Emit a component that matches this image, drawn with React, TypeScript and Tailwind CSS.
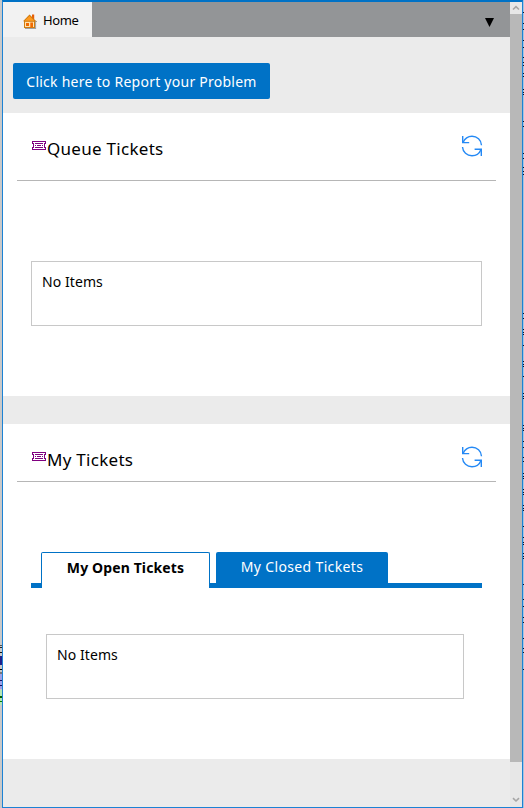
const leftMarks = [
  { y: 645, h: 1, color: "#555555" },
  { y: 647, h: 1, color: "#222222" },
  { y: 652, h: 1, color: "#111111" },
  { y: 656, h: 9, color: "#20208a" },
  { y: 669, h: 1, color: "#000000" },
  { y: 672, h: 2, color: "#777777" },
  { y: 674, h: 15, color: "#9da0e8" },
  { y: 680, h: 1, color: "#101060" },
  { y: 685, h: 1, color: "#101060" },
  { y: 690, h: 15, color: "#b4e6b4" },
  { y: 696, h: 2, color: "#006000" },
  { y: 701, h: 1, color: "#008000" },
]

const rightMarks = [
  12, 23, 29, 40, 47, 57, 62, 65, 73, 76, 89, 92, 94, 121, 126, 153, 158, 167, 171, 174,
  313, 318, 329, 332, 334, 345, 361, 364, 366, 376, 393, 396, 398, 425, 428, 430, 441,
  447, 457, 461, 473, 476, 478, 489, 492, 494, 505, 508, 510, 526, 537, 542, 544, 553, 556,
  558, 584, 599, 606, 617, 622, 638, 648, 652, 669,
]

function HomeIcon() {
  return (
    <svg width="15" height="15" viewBox="0 0 15 15" className="shrink-0">
      <path d="M2 14.5H13M12.6 8V15M12 7.5H14" stroke="#a0a0a0" strokeWidth="1" fill="none" />
      <path d="M9 .5H11.2V5H9Z" fill="#e85d04" />
      <path d="M6.5 .5L13.3 7.3H12V14H1V7.3H0Z" fill="#d07c10" />
      <path d="M6.5 2L11.3 6.7H1.7Z" fill="#ff9a1f" />
      <path d="M2 7.8H11V13H2Z" fill="#ffe2b0" />
      <path d="M3 9H6V12H3ZM7.3 8.5H10V13.3H7.3Z" fill="#f06a00" />
    </svg>
  )
}

function TicketIcon() {
  return (
    <svg width="14" height="9" viewBox="0 0 14 9" className="shrink-0" shapeRendering="crispEdges">
      <path
        d="M.5 .5H13.5V2.5H12.5V6.5H13.5V8.5H.5V6.5H1.5V2.5H.5Z"
        fill="none"
        stroke="#800080"
      />
      <path d="M3 2.5H11M3 6.5H11M3 4.5H4M5 4.5H9M10 4.5H11" fill="none" stroke="#800080" />
    </svg>
  )
}

function RefreshIcon() {
  return (
    <svg width="22" height="22" viewBox="0 0 22 22" fill="none" stroke="#2489f5" strokeWidth="1.4">
      <path d="M1.7 1V7.6H8.2" />
      <path d="M2 7.4C4 3 7 1.2 11 1.2C16 1.2 20.3 5 20.5 10.2" />
      <path d="M20.3 21V14.2H13.6" />
      <path d="M20 14.4C18.3 18.7 15 20.7 11 20.7C6 20.7 1.8 17 1.5 12" />
    </svg>
  )
}

function PanelHeader({ title, className }: { title: string; className: string }) {
  return (
    <div className={`mx-[14px] flex justify-between border-b border-[#b6b6b6] pr-[13px] pl-[15px] ${className}`}>
      <div className="flex">
        <div className="pt-[5px]">
          <TicketIcon />
        </div>
        <h2 className="ml-px pt-px text-[17px] leading-6 tracking-[0.28px]">{title}</h2>
      </div>
      <button className="-mt-px h-[22px]" aria-label="Refresh">
        <RefreshIcon />
      </button>
    </div>
  )
}

function EmptyList({ className }: { className: string }) {
  return (
    <div className={`h-[65px] border border-[#c8c8c8] px-[10px] pt-[10px] text-[14px] leading-5 tracking-[0.08px] ${className}`}>
      No Items
    </div>
  )
}

function ScrollBar() {
  return (
    <div className="flex w-3 shrink-0 flex-col bg-[#e7e7e7]">
      <svg width="12" height="12" viewBox="0 0 12 12" fill="none" stroke="#a5a5a5" strokeWidth="1.6">
        <path d="M3 7.5L6 4.7L9 7.5" />
      </svg>
      <div className="h-[748px] bg-[#b8b8b8]"></div>
      <svg className="mt-auto mb-[1px]" width="12" height="12" viewBox="0 0 12 12" fill="none" stroke="#a5a5a5" strokeWidth="1.6">
        <path d="M3 4.2L6 7L9 4.2" />
      </svg>
    </div>
  )
}

export default function App() {
  return (
    <div className="flex h-[808px] w-[524px] overflow-hidden font-['Noto_Sans',sans-serif] text-black">
      {/* Window behind, left edge */}
      <svg width="2" height="808" className="shrink-0 bg-[#c9c9c9]" shapeRendering="crispEdges">
        {leftMarks.map((m) => (
          <rect key={m.y} x="0" y={m.y} width="2" height={m.h} fill={m.color} />
        ))}
      </svg>

      <div className="flex w-[521px] shrink-0 border border-t-2 border-[#1c82d4] border-t-[#0072c6]">
        <main className="flex w-[507px] shrink-0 flex-col bg-[#ebebeb]">
          {/* Top bar */}
          <nav className="flex h-[35px] shrink-0 items-stretch justify-between bg-[#939597]">
            <div className="flex w-[89px] items-center bg-[#f2f2f2] pt-1 pl-5 text-[13px] tracking-[-0.35px]">
              <HomeIcon />
              <span className="ml-[5px] pb-px">Home</span>
            </div>
            <button className="flex items-center pt-[5px] pr-4" aria-label="More">
              <svg width="9" height="9" viewBox="0 0 9 9">
                <path d="M0 0H9L4.5 9Z" fill="#000" />
              </svg>
            </button>
          </nav>

          <div className="h-[76px] shrink-0 px-[10px] pt-[26px]">
            <button className="h-9 w-[257px] rounded-[2px] bg-[#0072c6] text-[14px] tracking-[0.25px] whitespace-nowrap text-white">
              Click here to Report your Problem
            </button>
          </div>

          {/* Queue */}
          <section className="h-[283px] shrink-0 bg-white">
            <PanelHeader title="Queue Tickets" className="h-[68px] pt-[23px]" />
            <EmptyList className="mx-7 mt-20" />
          </section>

          {/* My tickets */}
          <section className="mt-7 h-[335px] shrink-0 bg-white">
            <PanelHeader title="My Tickets" className="h-[58px] pt-[23px]" />
            <div className="mx-7 mt-[70px] flex h-9 bg-[linear-gradient(#0072c6,#0072c6)] bg-[length:100%_5px] bg-bottom bg-no-repeat pl-[10px] text-[14px]">
              <div className="w-[169px] rounded-t-[2px] border border-b-0 border-[#0072c6] bg-white pt-[5px] text-center leading-5 font-bold tracking-[0.12px]">
                My Open Tickets
              </div>
              <div className="ml-[6px] w-[172px] rounded-t-[2px] bg-[#0072c6] pt-[5px] text-center leading-5 tracking-[0.35px] text-white">
                My Closed Tickets
              </div>
            </div>
            <EmptyList className="mt-[46px] mr-[46px] ml-[43px]" />
          </section>
        </main>
        <ScrollBar />
      </div>

      {/* Window behind, right edge */}
      <svg width="1" height="808" className="shrink-0 bg-[#a9c3dd]" shapeRendering="crispEdges">
        {rightMarks.map((y) => (
          <rect key={y} x="0" y={y} width="1" height="1" fill="#101020" />
        ))}
      </svg>
    </div>
  )
}
